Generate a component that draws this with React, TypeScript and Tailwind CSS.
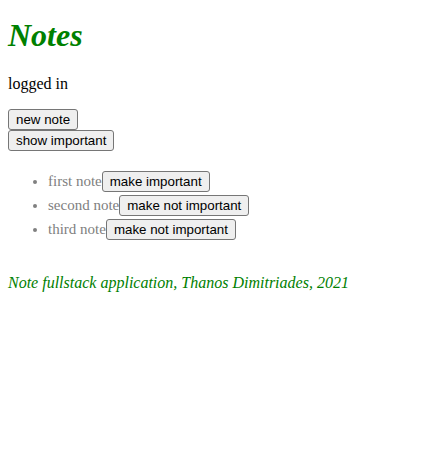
const notes = [
  { id: 1, content: "first note", important: false },
  { id: 2, content: "second note", important: true },
  { id: 3, content: "third note", important: true },
];

function Button({ children }: { children: React.ReactNode }) {
  return (
    <button className="bg-[#efefef] border border-[#767676] rounded-[3px] px-[7px] py-[2px] font-['Liberation_Sans',Arial,sans-serif] text-[13.333px] leading-[15px] text-black align-baseline">
      {children}
    </button>
  );
}

export default function App() {
  return (
    <div className="px-2 font-['Liberation_Serif','Times_New_Roman',serif] text-base leading-[normal] text-black bg-white min-h-screen">
      <h1 className="text-[32px] font-bold italic text-[#008000] mt-[17px] mb-[21px]">
        Notes
      </h1>

      <p className="my-4">logged in</p>

      <div>
        <Button>new note</Button>
      </div>
      <div>
        <Button>show important</Button>
      </div>

      <ul className="mt-[18px] mb-[6px] pl-10 list-disc text-[#808080]">
        {notes.map((note) => (
          <li key={note.id} className="text-[15px] leading-[24px]">
            {note.content}
            <Button>
              {note.important ? "make not important" : "make important"}
            </Button>
          </li>
        ))}
      </ul>

      {/* Footer */}
      <div className="italic text-[#008000] text-base">
        <br />
        <em>Note fullstack application, Thanos Dimitriades, 2021</em>
      </div>
    </div>
  );
}
